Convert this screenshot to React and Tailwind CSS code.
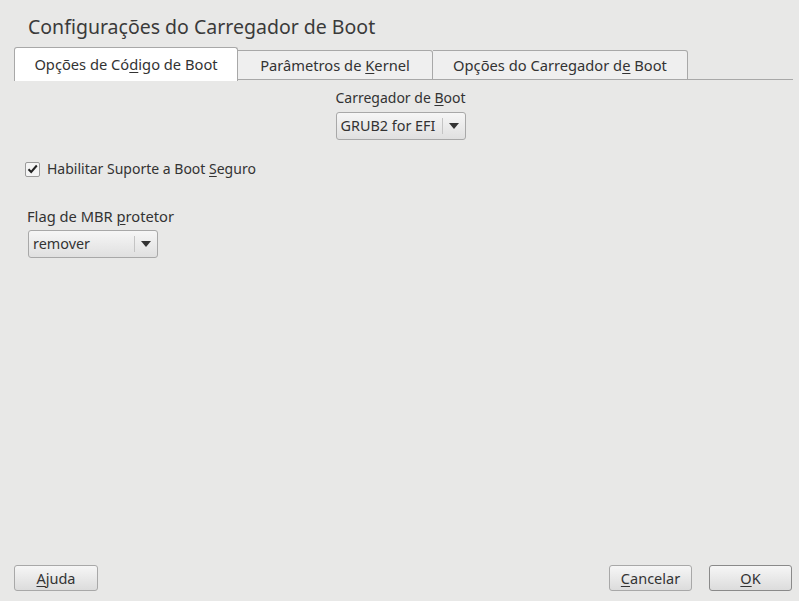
import React from 'react';

const font = { fontFamily: '"Noto Sans", "Open Sans", sans-serif' };

function Combo({ value }) {
    return (
        <div className="flex h-[28px] w-[130px] items-center rounded-[3px] border border-[#a8a8a8] bg-gradient-to-b from-[#f6f6f6] to-[#e0e0e0] text-[14.4px] text-[#333]">
            <span className="flex-1 pl-[4px] leading-[20px]">{value}</span>
            <span className="h-[16px] w-px bg-[#c4c4c4]" />
            <span className="flex w-[22px] justify-center">
                <svg width="10" height="6" viewBox="0 0 10 6">
                    <path d="M0 0 L10 0 L5 6 Z" fill="#333" />
                </svg>
            </span>
        </div>
    );
}

function Button({ children, strong }) {
    return (
        <button
            className={
                'h-[26px] rounded-[3px] border bg-gradient-to-b from-[#f6f6f6] to-[#dcdcdc] text-[14.5px] leading-[20px] text-[#333] ' +
                (strong ? 'border-[#8a8a8a]' : 'border-[#a8a8a8]')
            }
        >
            {children}
        </button>
    );
}

export default function App() {
    return (
        <div style={font} className="flex h-[601px] w-[799px] flex-col bg-[#e8e8e7] text-[#333]">
            <h1 className="pl-[28px] pt-[13px] text-[19.5px] leading-[28px] text-[#3a3a3a]">
                Configurações do Carregador de Boot
            </h1>

            {/* tabs */}
            <div className="mt-[6px] flex items-start pl-[14px] pr-[6px] text-[14.7px]">
                <div className="flex h-[34px] w-[224px] items-center justify-center rounded-t-[3px] border border-b-0 border-[#a8a8a8] bg-white">
                    <span>Opções de Có<u className="underline-offset-2">d</u>igo de Boot</span>
                </div>
                <div className="mt-[3px] flex h-[30px] w-[195px] items-center justify-center rounded-tr-[3px] border-b border-r border-t border-[#a8a8a8] bg-[#efefef]">
                    <span>Parâmetros de <u className="underline-offset-2">K</u>ernel</span>
                </div>
                <div className="mt-[3px] flex h-[30px] w-[255px] items-center justify-center rounded-tr-[3px] border-b border-r border-t border-[#a8a8a8] bg-[#efefef]">
                    <span>Opções do Carregador d<u className="underline-offset-2">e</u> Boot</span>
                </div>
                <div className="mt-[3px] h-[30px] flex-1 border-b border-[#a8a8a8]" />
            </div>

            {/* content */}
            <div className="flex flex-1 flex-col px-[14px] text-[14px]">
                <div className="mt-[7px] flex flex-col items-center pl-[2px]">
                    <span className="leading-[20px]">Carregador de <u className="underline-offset-2">B</u>oot</span>
                    <div className="mt-[4px]">
                        <Combo value="GRUB2 for EFI" />
                    </div>
                </div>

                <div className="mt-[19px] flex h-[20px] items-center gap-[7px] pl-[11px]">
                    <span className="flex h-[15px] w-[15px] items-center justify-center rounded-[2px] border border-[#9a9a9a] bg-[#f4f4f4]">
                        <svg width="11" height="10" viewBox="0 0 11 10">
                            <path d="M1.5 5.2 L4.2 8 L9.8 1.5" fill="none" stroke="#222" strokeWidth="2" />
                        </svg>
                    </span>
                    <span className="leading-[20px]">Habilitar Suporte a Boot <u className="underline-offset-2">S</u>eguro</span>
                </div>

                <div className="mt-[27px] pl-[13px] text-[14.7px] leading-[20px]">
                    Flag de MBR <u className="underline-offset-2">p</u>rotetor
                </div>
                <div className="mt-[4px] pl-[14px]">
                    <Combo value="remover" />
                </div>
            </div>

            {/* buttons */}
            <div className="flex pb-[10px] pl-[14px] pr-[7px]">
                <Button>
                    <span className="inline-block w-[82px]"><u className="underline-offset-2">A</u>juda</span>
                </Button>
                <div className="ml-auto flex gap-[17px]">
                    <Button>
                        <span className="inline-block w-[81px]"><u className="underline-offset-2">C</u>ancelar</span>
                    </Button>
                    <Button strong>
                        <span className="inline-block w-[81px]"><u className="underline-offset-2">O</u>K</span>
                    </Button>
                </div>
            </div>
        </div>
    );
}
